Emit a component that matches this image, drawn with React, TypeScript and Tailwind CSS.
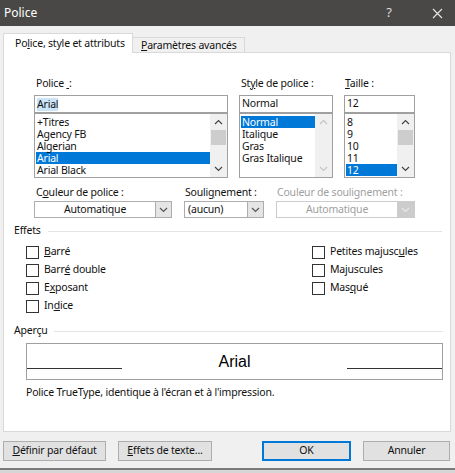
import React from "react"

const Up = ({ c = "#333" }: { c?: string }) => (
  <svg width="9" height="6" viewBox="0 0 9 6">
    <polyline points="1,5 4.5,1.5 8,5" fill="none" stroke={c} strokeWidth="1.2" />
  </svg>
)

const Down = ({ c = "#333" }: { c?: string }) => (
  <svg width="9" height="6" viewBox="0 0 9 6">
    <polyline points="1,1 4.5,4.5 8,1" fill="none" stroke={c} strokeWidth="1.2" />
  </svg>
)

function ListBox({
  items,
  selected,
  width,
  thumb,
}: {
  items: string[]
  selected: number
  width: string
  thumb: boolean
}) {
  const c = thumb ? "#444" : "#c4c4c4"
  return (
    <div className={`${width} h-[65px] border border-[#a0a0a0] bg-white flex`}>
      <div className="flex-1 pt-[2px] pl-[1px]">
        {items.map((it, i) => (
          <div
            key={it}
            className={`h-[12px] leading-[12px] pl-[1px] ${
              i === selected ? "bg-[#0078d7] text-white" : ""
            }`}
          >
            {it}
          </div>
        ))}
      </div>
      <div className="w-[17px] bg-[#f0f0f0] flex flex-col items-center">
        <div className="h-[16px] flex items-center">
          <Up c={c} />
        </div>
        <div className="flex-1 w-full px-[1px]">
          {thumb && <div className="h-[15px] bg-[#cdcdcd]" />}
        </div>
        <div className="h-[16px] flex items-center">
          <Down c={c} />
        </div>
      </div>
    </div>
  )
}

function Check({ label }: { label: React.ReactNode }) {
  return (
    <div className="h-[18px] flex items-center gap-[5px]">
      <div className="w-[13px] h-[13px] border border-[#333] bg-white" />
      <span>{label}</span>
    </div>
  )
}

function Btn({
  children,
  w,
  primary,
}: {
  children: React.ReactNode
  w: string
  primary?: boolean
}) {
  return (
    <div
      className={`${w} h-[20px] flex items-center justify-center bg-[#e1e1e1] border ${
        primary
          ? "border-[#0078d7] shadow-[inset_0_0_0_1px_#0078d7]"
          : "border-[#adadad]"
      }`}
    >
      {children}
    </div>
  )
}

export default function App() {
  return (
    <div className="w-[455px] h-[473px] bg-[#f0f0f0] flex flex-col overflow-hidden whitespace-nowrap text-[10.5px] tracking-[-0.2px] text-[#111] font-['Noto_Sans',sans-serif]">
      {/* title bar */}
      <div className="h-[26px] shrink-0 bg-[#4a4846] flex items-center text-white tracking-normal">
        <span className="pl-[4px] text-[12px]">Police</span>
        <span className="ml-auto mr-[40px] text-[13px] text-[#ddd]">?</span>
        <svg width="11" height="11" viewBox="0 0 11 11" className="mr-[12px]">
          <path d="M1 1 L10 10 M10 1 L1 10" stroke="#e8e8e8" strokeWidth="1.1" />
        </svg>
      </div>

      {/* tabs */}
      <div className="mt-[7px] h-[19px] pl-[3px] flex items-end shrink-0">
        <div className="relative z-10 -mb-px h-[20px] w-[130px] bg-white border border-b-0 border-[#d9d9d9] pl-[11px] leading-[18px]">
          Po<u>l</u>ice, style et attributs
        </div>
        <div className="h-[15px] w-[112px] border border-l-0 border-b-0 border-[#d9d9d9] bg-[#f0f0f0] pl-[8px] leading-[14px]">
          <u>P</u>aramètres avancés
        </div>
      </div>

      {/* panel */}
      <div className="ml-[3px] w-[448px] h-[380px] shrink-0 bg-white border border-[#d9d9d9] pt-[22px]">
        {/* font lists */}
        <div className="flex pl-[30px] gap-[11px]">
          <div className="w-[194px]">
            <div className="leading-[16px] mb-[4px] pl-[2px]">
              Police <u>&nbsp;</u>:
            </div>
            <div className="h-[18px] border border-[#a0a0a0] flex items-center px-[2px]">
              <span className="bg-[#cce4f7] leading-[13px]">Arial</span>
            </div>
            <ListBox
              width="w-[194px]"
              items={["+Titres", "Agency FB", "Algerian", "Arial", "Arial Black"]}
              selected={3}
              thumb
            />
          </div>
          <div className="w-[94px]">
            <div className="leading-[16px] mb-[4px] pl-[2px]">
              St<u>y</u>le de police :
            </div>
            <div className="h-[18px] border border-[#a0a0a0] flex items-center px-[2px]">
              Normal
            </div>
            <ListBox
              width="w-[94px]"
              items={["Normal", "Italique", "Gras", "Gras Italique"]}
              selected={0}
              thumb={false}
            />
          </div>
          <div className="w-[71px]">
            <div className="leading-[16px] mb-[4px] pl-[1px]">
              <u>T</u>aille :
            </div>
            <div className="h-[18px] border border-[#a0a0a0] flex items-center px-[2px]">
              12
            </div>
            <ListBox
              width="w-[71px]"
              items={["8", "9", "10", "11", "12"]}
              selected={4}
              thumb
            />
          </div>
        </div>

        {/* dropdowns */}
        <div className="flex pl-[30px] gap-[12px] mt-[6px]">
          <div className="w-[138px]">
            <div className="leading-[16px] mb-[1px] pl-[2px]">
              C<u>o</u>uleur de police :
            </div>
            <div className="h-[17px] border border-[#adadad] flex">
              <div className="flex-1 text-center leading-[15px]">Automatique</div>
              <div className="w-[16px] bg-[#e5e5e5] border-l border-[#adadad] flex items-center justify-center">
                <Down c="#555" />
              </div>
            </div>
          </div>
          <div className="w-[80px]">
            <div className="leading-[16px] mb-[1px] pl-[1px]">
              Souli<u>g</u>nement :
            </div>
            <div className="h-[17px] border border-[#adadad] flex">
              <div className="flex-1 pl-[3px] leading-[15px]">(aucun)</div>
              <div className="w-[16px] bg-[#e5e5e5] border-l border-[#adadad] flex items-center justify-center">
                <Down c="#555" />
              </div>
            </div>
          </div>
          <div className="w-[139px] text-[#a0a0a0]">
            <div className="leading-[16px] mb-[1px] pl-[1px]">Couleur de soulignement :</div>
            <div className="h-[17px] border border-[#cccccc] flex">
              <div className="flex-1 text-center leading-[15px]">Automatique</div>
              <div className="w-[17px] bg-[#cccccc] flex items-center justify-center">
                <Down c="#e8e8e8" />
              </div>
            </div>
          </div>
        </div>

        {/* effets */}
        <div className="flex items-center pl-[10px] pr-[8px] mt-[6px] h-[14px]">
          <span>Effets</span>
          <div className="flex-1 h-px bg-[#e3e3e3] ml-[7px]" />
        </div>
        <div className="mt-[5px] pl-[22px] flex">
          <div className="w-[286px]">
            <Check label={<><u>B</u>arré</>} />
            <Check label={<>Barr<u>é</u> double</>} />
            <Check label={<>E<u>x</u>posant</>} />
            <Check label={<>In<u>d</u>ice</>} />
          </div>
          <div>
            <Check label={<>Petites majusc<u>u</u>les</>} />
            <Check label={<>Majuscules</>} />
            <Check label={<>Mas<u>q</u>ué</>} />
          </div>
        </div>

        {/* aperçu */}
        <div className="flex items-center pl-[10px] pr-[7px] mt-[9px] h-[14px]">
          <span>Aperçu</span>
          <div className="flex-1 h-px bg-[#e3e3e3] ml-[6px]" />
        </div>
        <div className="ml-[22px] mt-[5px] w-[417px] h-[37px] border border-[#a0a0a0] flex">
          <div className="w-[95px] h-px bg-[#333] mt-[24px]" />
          <div className="flex-1 text-center pt-[10px] leading-[16px] text-[16px] tracking-normal text-black font-['Liberation_Sans',Arial,sans-serif]">
            Arial
          </div>
          <div className="w-[95px] h-px bg-[#333] mt-[24px]" />
        </div>
        <div className="ml-[22px] mt-[5px] leading-[14px]">
          Police TrueType, identique à l'écran et à l'impression.
        </div>
      </div>

      {/* buttons */}
      <div className="mt-[9px] pl-[3px] flex shrink-0">
        <Btn w="w-[103px]">
          <span>
            <u>D</u>éfinir par défaut
          </span>
        </Btn>
        <div className="ml-[12px]">
          <Btn w="w-[94px]">
            <span>
              <u>E</u>ffets de texte...
            </span>
          </Btn>
        </div>
        <div className="ml-[50px]">
          <Btn w="w-[89px]" primary>
            OK
          </Btn>
        </div>
        <div className="ml-[12px]">
          <Btn w="w-[87px]">Annuler</Btn>
        </div>
      </div>

      <div className="mt-[7px] h-[2px] bg-[#7a7a7a] shrink-0" />
      <div className="flex-1 bg-[#d6d6d6]" />
    </div>
  )
}
